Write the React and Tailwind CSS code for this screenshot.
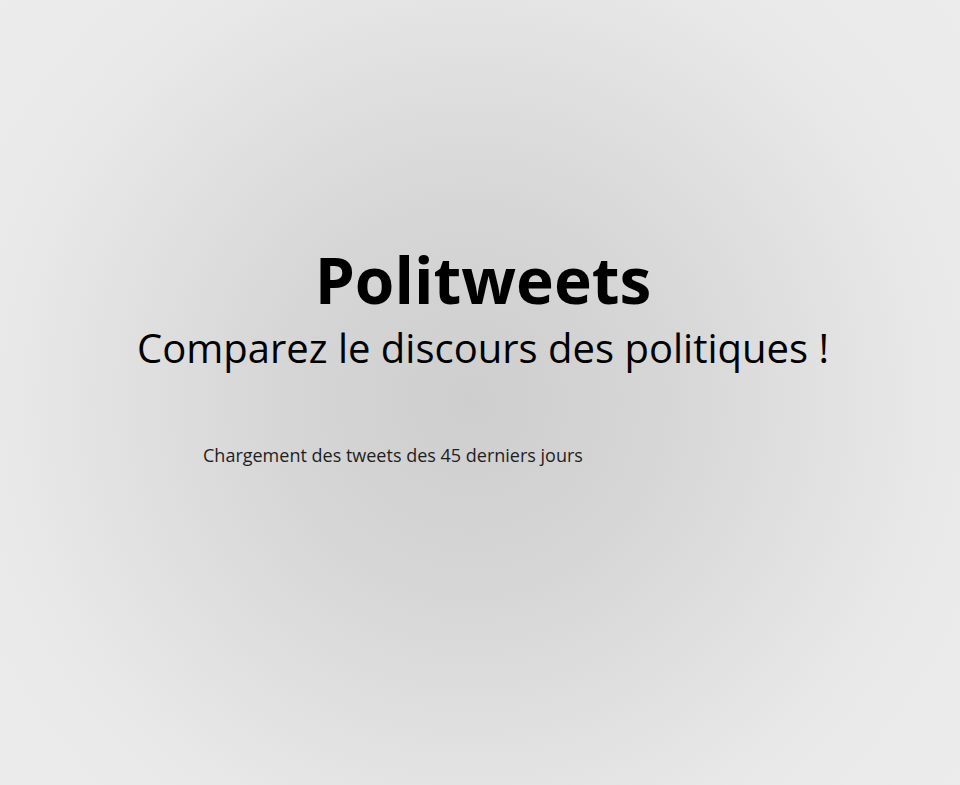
export default function App() {
  return (
    <div
      className="min-h-screen w-full bg-[radial-gradient(circle_at_470px_400px,#cecece_0%,#d6d6d6_30%,#e9e9e9_75%,#ececec_100%)] text-black"
      style={{ fontFamily: '"Open Sans", "Noto Sans", sans-serif' }}
    >
      <div className="pt-[236px] pl-[6px] flex flex-col items-center">
        <h1 className="text-[64px] font-bold leading-[88px]">Politweets</h1>
        <h2 className="text-[40px] leading-[48px]">Comparez le discours des politiques !</h2>
      </div>
      <p className="mt-[70px] pl-[203px] text-[18px] text-[#1e1e1e]">Chargement des tweets des 45 derniers jours</p>
    </div>
  )
}
